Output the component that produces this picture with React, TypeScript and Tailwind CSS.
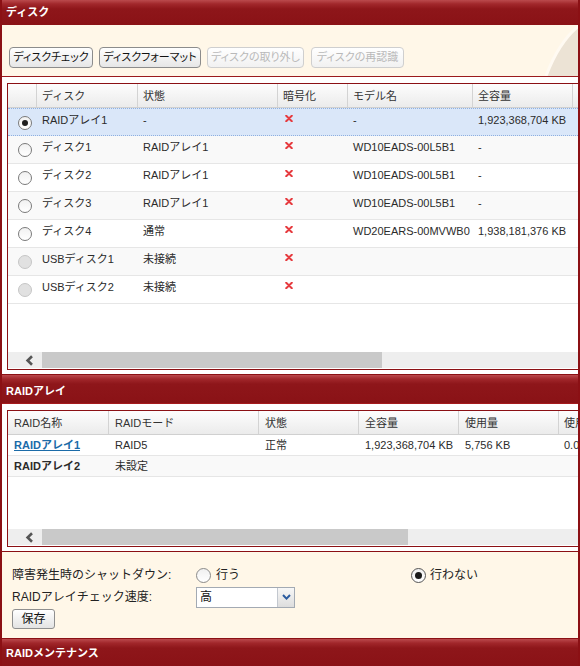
import React from "react";

const F = "font-['Liberation_Sans','Noto_Sans_CJK_JP',sans-serif]";
const HEAD_BG =
  "bg-[linear-gradient(180deg,#bb4a4d_0px,#a1272b_4px,#8e161a_9px,#8a1216_100%)]";

type Disk = {
  name: string;
  status: string;
  model: string;
  cap: string;
  extra: string;
  sel?: boolean;
  dis?: boolean;
};

const disks: Disk[] = [
  { name: "RAIDアレイ1", status: "-", model: "-", cap: "1,923,368,704 KB", extra: "-", sel: true },
  { name: "ディスク1", status: "RAIDアレイ1", model: "WD10EADS-00L5B1", cap: "-", extra: "-" },
  { name: "ディスク2", status: "RAIDアレイ1", model: "WD10EADS-00L5B1", cap: "-", extra: "-" },
  { name: "ディスク3", status: "RAIDアレイ1", model: "WD10EADS-00L5B1", cap: "-", extra: "-" },
  { name: "ディスク4", status: "通常", model: "WD20EARS-00MVWB0", cap: "1,938,181,376 KB", extra: "-" },
  { name: "USBディスク1", status: "未接続", model: "", cap: "", extra: "", dis: true },
  { name: "USBディスク2", status: "未接続", model: "", cap: "", extra: "", dis: true },
];

function XMark() {
  return (
    <svg width="8" height="7" viewBox="0 0 8 7">
      <path d="M1.2 0.8 L6.8 6.2 M6.8 0.8 L1.2 6.2" stroke="#e63b3f" strokeWidth="2" strokeLinecap="round" />
    </svg>
  );
}

function TRadio({ checked = false, disabled = false }: { checked?: boolean; disabled?: boolean }) {
  return (
    <span
      className={`flex h-[14px] w-[14px] items-center justify-center rounded-full border ${
        disabled
          ? "border-[#c6c6c6] bg-[#e1e1e1]"
          : "border-[#7a7a7a] bg-[linear-gradient(180deg,#f1f1f1,#ffffff)]"
      }`}
    >
      {checked && <span className="h-[6px] w-[6px] rounded-full bg-[#1e1e1e]" />}
    </span>
  );
}

function FRadio({ checked = false }: { checked?: boolean }) {
  return (
    <span
      className={`flex h-[15px] w-[15px] items-center justify-center rounded-full border bg-[linear-gradient(180deg,#f0f0f0,#ffffff)] ${
        checked ? "border-[#555555]" : "border-[#8a8a8a]"
      }`}
    >
      {checked && <span className="h-[7px] w-[7px] rounded-full bg-[#1a1a1a]" />}
    </span>
  );
}

function HScroll({ thumb }: { thumb: string }) {
  return (
    <div className="flex h-[16px] shrink-0 bg-[#eeeeee]">
      <div className="flex w-[34px] shrink-0 items-center pl-[17px]">
        <svg width="9" height="11" viewBox="0 0 9 11">
          <path d="M7 1.2 L2.6 5.5 L7 9.8" fill="none" stroke="#555555" strokeWidth="2.6" />
        </svg>
      </div>
      <div className={`${thumb} shrink-0 bg-[#c9c9c9]`} />
    </div>
  );
}

function HCell({ w, children }: { w: string; children?: React.ReactNode }) {
  return (
    <div className={`${w} flex shrink-0 items-center whitespace-nowrap border-r border-[#d3d3d3] pl-[5px] pt-[2px]`}>
      {children}
    </div>
  );
}

function Btn({ w, children, disabled = false }: { w: string; children: React.ReactNode; disabled?: boolean }) {
  return (
    <div
      className={`${w} flex h-[21px] shrink-0 items-center justify-center whitespace-nowrap rounded-[4px] border text-[11px] [font-feature-settings:'palt'] ${
        disabled
          ? "border-[#cfcfcf] bg-[linear-gradient(180deg,#ffffff,#f1f1f1)] text-[#b9b9b9]"
          : "border-[#8c8c8c] bg-[linear-gradient(180deg,#ffffff,#e6e6e6)] text-[#111111]"
      }`}
    >
      {children}
    </div>
  );
}

export default function App() {
  return (
    <div
      className={`${F} flex h-[666px] w-[580px] flex-col overflow-hidden border-x-2 border-[#8b1014] bg-white text-[#2b2b2b]`}
    >
      {/* Section 1 header */}
      <div className={`flex h-[25px] shrink-0 items-center pl-[4px] text-[11px] font-bold text-white ${HEAD_BG}`}>
        ディスク
      </div>

      {/* Buttons area */}
      <div className="relative flex h-[52px] shrink-0 items-start border-b border-[#9b1a1d] bg-[#fff7e8] pl-[7px] pt-[22px]">
        <svg className="absolute left-0 top-0" width="576" height="51" viewBox="0 0 576 51">
          <path d="M544 51 C552 30 562 12 578 0 L578 51 Z" fill="#ece3d5" />
          <path d="M544 51 C552 30 562 12 578 0" fill="none" stroke="#fffaf2" strokeWidth="3" />
        </svg>
        <div className="relative flex">
          <Btn w="w-[84px]">ディスクチェック</Btn>
          <div className="ml-[6px]">
            <Btn w="w-[102px]">ディスクフォーマット</Btn>
          </div>
          <div className="ml-[6px]">
            <Btn w="w-[97px]" disabled>
              ディスクの取り外し
            </Btn>
          </div>
          <div className="ml-[7px]">
            <Btn w="w-[93px]" disabled>
              ディスクの再認識
            </Btn>
          </div>
        </div>
      </div>

      {/* Disk table area */}
      <div className="h-[298px] shrink-0 border-b border-[#8b1014] bg-white pb-[4px] pl-[5px] pt-[6px]">
        <div className="flex h-[287px] w-[700px] flex-col border border-[#8b1014] bg-white">
          <div className="flex h-[24px] shrink-0 border-b border-[#d0d0d0] bg-[linear-gradient(180deg,#fdfdfd,#ebebeb)] text-[11px] text-[#333333]">
            <HCell w="w-[29px]" />
            <HCell w="w-[101px]">ディスク</HCell>
            <HCell w="w-[140px]">状態</HCell>
            <HCell w="w-[70px]">暗号化</HCell>
            <HCell w="w-[125px]">モデル名</HCell>
            <HCell w="w-[100px]">全容量</HCell>
            <HCell w="w-[100px]">使用量</HCell>
          </div>
          {disks.map((d, i) => (
            <div
              key={d.name}
              className={`flex h-[28px] shrink-0 text-[11px] leading-[14px] ${
                d.sel
                  ? "border-y border-dotted border-[#8fb0e0] bg-[#dae7f9]"
                  : i % 2 === 1
                  ? "border-b border-[#e6e6e6] bg-[#f9f9f9]"
                  : "border-b border-[#e6e6e6] bg-white"
              }`}
            >
              <div className="w-[29px] shrink-0 pl-[10px] pt-[7px]">
                <TRadio checked={d.sel} disabled={d.dis} />
              </div>
              <div className="w-[101px] shrink-0 whitespace-nowrap pl-[5px] pt-[4px]">{d.name}</div>
              <div className="w-[140px] shrink-0 whitespace-nowrap pl-[5px] pt-[4px]">{d.status}</div>
              <div className="w-[70px] shrink-0 pl-[7px] pt-[6px]">
                <XMark />
              </div>
              <div className="w-[125px] shrink-0 whitespace-nowrap pl-[5px] pt-[4px]">{d.model}</div>
              <div className="w-[100px] shrink-0 whitespace-nowrap pl-[5px] pt-[4px]">{d.cap}</div>
              <div className="w-[100px] shrink-0 whitespace-nowrap pl-[5px] pt-[4px]">{d.extra}</div>
            </div>
          ))}
          <div className="flex-1" />
          <HScroll thumb="w-[340px]" />
          <div className="h-[1px] shrink-0" />
        </div>
      </div>

      {/* Section 2 header */}
      <div className={`flex h-[29px] shrink-0 items-center border-b border-[#a51a1d] pl-[4px] pt-[5px] text-[11px] font-bold text-white ${HEAD_BG}`}>
        RAIDアレイ
      </div>

      {/* RAID table area */}
      <div className="h-[148px] shrink-0 border-b border-[#8b1014] bg-white pb-[4px] pl-[5px] pt-[6px]">
        <div className="flex h-[137px] w-[700px] flex-col border border-[#8b1014] bg-white">
          <div className="flex h-[24px] shrink-0 border-b border-[#d0d0d0] bg-[linear-gradient(180deg,#fdfdfd,#ebebeb)] text-[11px] text-[#333333]">
            <div className="flex w-[101px] shrink-0 items-center whitespace-nowrap border-r border-[#d3d3d3] pl-[6px] pt-[2px]">RAID名称</div>
            <div className="flex w-[150px] shrink-0 items-center whitespace-nowrap border-r border-[#d3d3d3] pl-[6px] pt-[2px]">RAIDモード</div>
            <div className="flex w-[100px] shrink-0 items-center whitespace-nowrap border-r border-[#d3d3d3] pl-[6px] pt-[2px]">状態</div>
            <div className="flex w-[100px] shrink-0 items-center whitespace-nowrap border-r border-[#d3d3d3] pl-[6px] pt-[2px]">全容量</div>
            <div className="flex w-[100px] shrink-0 items-center whitespace-nowrap border-r border-[#d3d3d3] pl-[6px] pt-[2px]">使用量</div>
            <div className="flex w-[100px] shrink-0 items-center whitespace-nowrap border-r border-[#d3d3d3] pl-[5px] pt-[2px]">使用率</div>
          </div>
          <div className="flex h-[21px] shrink-0 items-center border-b border-[#e6e6e6] bg-white text-[11px]">
            <div className="w-[101px] shrink-0 whitespace-nowrap pl-[6px] font-bold text-[#1b6ba8] underline">RAIDアレイ1</div>
            <div className="w-[150px] shrink-0 whitespace-nowrap pl-[6px]">RAID5</div>
            <div className="w-[100px] shrink-0 whitespace-nowrap pl-[6px]">正常</div>
            <div className="w-[100px] shrink-0 whitespace-nowrap pl-[6px]">1,923,368,704 KB</div>
            <div className="w-[100px] shrink-0 whitespace-nowrap pl-[6px]">5,756 KB</div>
            <div className="w-[100px] shrink-0 whitespace-nowrap pl-[5px]">0.00 %</div>
          </div>
          <div className="flex h-[21px] shrink-0 items-center border-b border-[#e6e6e6] bg-[#f9f9f9] text-[11px]">
            <div className="w-[101px] shrink-0 whitespace-nowrap pl-[6px] font-bold text-[#2b2b2b]">RAIDアレイ2</div>
            <div className="w-[150px] shrink-0 whitespace-nowrap pl-[6px]">未設定</div>
          </div>
          <div className="flex-1" />
          <HScroll thumb="w-[366px]" />
          <div className="h-[1px] shrink-0" />
        </div>
      </div>

      {/* Form area */}
      <div className="h-[87px] shrink-0 border-b border-[#8b1014] bg-[#fff7e8] pl-[10px] pt-[12px] text-[12px] text-[#222222]">
        <div className="flex h-[22px] items-center">
          <div className="w-[184px] shrink-0 whitespace-nowrap">障害発生時のシャットダウン:</div>
          <div className="flex w-[215px] shrink-0 items-center gap-[5px]">
            <FRadio />
            <span>行う</span>
          </div>
          <div className="flex items-center gap-[4px]">
            <FRadio checked />
            <span>行わない</span>
          </div>
        </div>
        <div className="flex h-[22px] items-center">
          <div className="w-[184px] shrink-0 whitespace-nowrap">RAIDアレイチェック速度:</div>
          <div className="flex h-[21px] w-[99px] shrink-0 border border-[#a3aab3] bg-white">
            <div className="flex flex-1 items-center pl-[3px] text-[12px] text-[#111111]">高</div>
            <div className="flex w-[17px] shrink-0 items-center justify-center border-l border-[#c3c8cf] bg-[linear-gradient(180deg,#f7f7f7,#dddddd)]">
              <svg width="9" height="6" viewBox="0 0 9 6">
                <path d="M1 1 L4.5 4.6 L8 1" fill="none" stroke="#2a5b9f" strokeWidth="2" />
              </svg>
            </div>
          </div>
        </div>
        <div className="mt-[1px] flex h-[20px] w-[43px] items-center justify-center rounded-[3px] border border-[#8f8f8f] bg-[linear-gradient(180deg,#ffffff,#e3e3e3)] text-[12px] text-[#111111]">
          保存
        </div>
      </div>

      {/* Section 3 header */}
      <div className={`flex h-[28px] shrink-0 items-center pl-[4px] pt-[1px] text-[11px] font-bold text-white ${HEAD_BG}`}>
        RAIDメンテナンス
      </div>
    </div>
  );
}
